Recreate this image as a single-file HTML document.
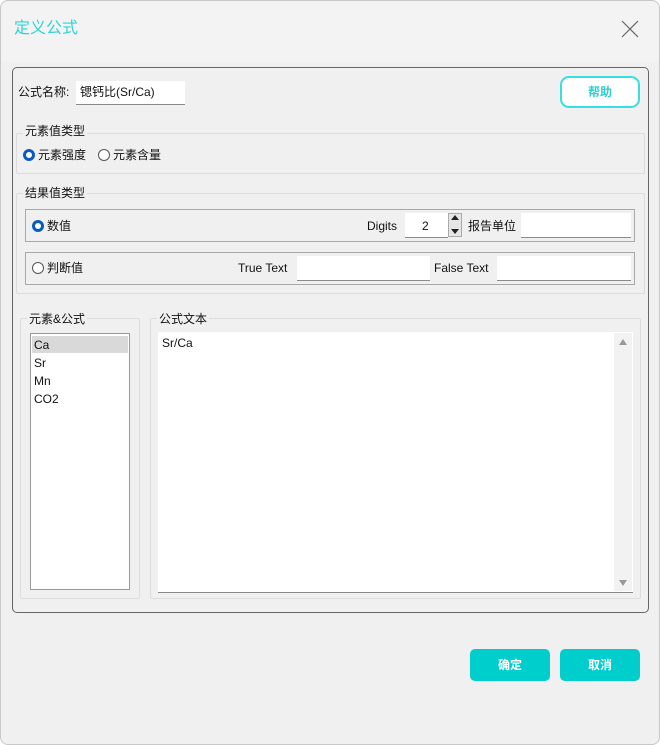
<!DOCTYPE html>
<html><head><meta charset="utf-8"><style>
*{box-sizing:border-box;margin:0;padding:0}
body{width:660px;height:745px;background:#fff;font-family:"Liberation Sans","Noto Sans CJK SC",sans-serif;font-size:12px;color:#111;position:relative;overflow:hidden}
.win{position:absolute;left:0;top:0;width:660px;height:745px;border-radius:8px;background:#f0f0f0;overflow:hidden}
.frame{position:absolute;left:0;top:0;width:660px;height:745px;border:1px solid #c8c8c8;border-radius:8px;pointer-events:none}
.hdr{position:absolute;left:0;top:0;width:660px;height:62px;background:#f3f3f3}
.a{position:absolute}
.t{position:absolute;white-space:nowrap;line-height:14px}
.inp{position:absolute;background:#fff;border-bottom:1px solid #8a8a8a}
.grp{position:absolute;border:1px solid #dcdcdc;border-radius:2px}
.box{position:absolute;border:1px solid #a8a8a8;background:#f0f0f0}
.rad{position:absolute;width:12px;height:12px;border-radius:50%;border:1px solid #555;background:#fff}
.rad.on{border:3.5px solid #0a5bbf}
.btn{position:absolute;width:80px;height:32px;border-radius:5px;background:#00cecd;color:#fff;font-weight:bold;text-align:center;line-height:32px;font-size:12px}
</style></head><body>
<div class="win">
<div class="hdr"></div>
<div class="t" style="left:14px;top:19px;font-size:16px;line-height:20px;color:#2fd4d4">定义公式</div>
<svg class="a" style="left:620px;top:19px" width="20" height="20"><path d="M2 2L18 18M18 2L2 18" stroke="#666" stroke-width="1.2"/></svg>

<div class="a" style="left:12px;top:67px;width:637px;height:546px;border:1px solid #666;border-radius:5px;background:#f0f0f0"></div>
<div class="t" style="left:18px;top:85px">公式名称:</div>
<div class="inp" style="left:76px;top:81px;width:109px;height:24px"></div>
<div class="t" style="left:80px;top:85px">锶钙比(Sr/Ca)</div>
<div class="a" style="left:560px;top:76px;width:80px;height:32px;border:2px solid #35e0e0;border-radius:9px;background:#fff;color:#2fcfcf;text-align:center;line-height:28px;font-weight:bold">帮助</div>

<div class="grp" style="left:16px;top:133px;width:629px;height:41px"></div>
<div class="t" style="left:23px;top:124px;background:#f0f0f0;padding:0 2px">元素值类型</div>
<div class="rad on" style="left:23px;top:149px"></div>
<div class="t" style="left:38px;top:148px">元素强度</div>
<div class="rad" style="left:98px;top:149px"></div>
<div class="t" style="left:113px;top:148px">元素含量</div>

<div class="grp" style="left:16px;top:193px;width:629px;height:101px"></div>
<div class="t" style="left:23px;top:186px;background:#f0f0f0;padding:0 2px">结果值类型</div>
<div class="box" style="left:25px;top:209px;width:610px;height:33px"></div>
<div class="rad on" style="left:32px;top:220px"></div>
<div class="t" style="left:47px;top:219px">数值</div>
<div class="t" style="left:367px;top:219px">Digits</div>
<div class="inp" style="left:405px;top:213px;width:43px;height:25px"></div>
<div class="t" style="left:422px;top:219px">2</div>
<div class="a" style="left:448px;top:213px;width:14px;height:24px;border:1px solid #aaa;background:#e6e6e6"></div>
<div class="a" style="left:451px;top:215px;width:0;height:0;border-left:4px solid transparent;border-right:4px solid transparent;border-bottom:5px solid #222"></div>
<div class="a" style="left:451px;top:229px;width:0;height:0;border-left:4px solid transparent;border-right:4px solid transparent;border-top:5px solid #222"></div>
<div class="t" style="left:468px;top:219px">报告单位</div>
<div class="inp" style="left:521px;top:213px;width:110px;height:25px"></div>

<div class="box" style="left:25px;top:252px;width:610px;height:33px"></div>
<div class="rad" style="left:32px;top:262px"></div>
<div class="t" style="left:47px;top:261px">判断值</div>
<div class="t" style="left:238px;top:261px">True Text</div>
<div class="inp" style="left:297px;top:256px;width:133px;height:25px"></div>
<div class="t" style="left:434px;top:261px">False Text</div>
<div class="inp" style="left:497px;top:256px;width:134px;height:25px"></div>

<div class="grp" style="left:20px;top:318px;width:120px;height:281px"></div>
<div class="t" style="left:27px;top:312px;background:#f0f0f0;padding:0 2px">元素&amp;公式</div>
<div class="a" style="left:30px;top:333px;width:100px;height:257px;background:#fff;border:1px solid #999"></div>
<div class="a" style="left:32px;top:336px;width:96px;height:17px;background:#d9d9d9"></div>
<div class="t" style="left:34px;top:338px">Ca</div>
<div class="t" style="left:34px;top:356px">Sr</div>
<div class="t" style="left:34px;top:374px">Mn</div>
<div class="t" style="left:34px;top:392px">CO2</div>

<div class="grp" style="left:150px;top:318px;width:491px;height:281px"></div>
<div class="t" style="left:157px;top:312px;background:#f0f0f0;padding:0 2px">公式文本</div>
<div class="a" style="left:158px;top:332px;width:475px;height:261px;background:#fff;border-bottom:1px solid #888"></div>
<div class="t" style="left:162px;top:336px">Sr/Ca</div>
<div class="a" style="left:614px;top:333px;width:18px;height:258px;background:#f2f2f2"></div>
<div class="a" style="left:619px;top:339px;width:0;height:0;border-left:4px solid transparent;border-right:4px solid transparent;border-bottom:6px solid #999"></div>
<div class="a" style="left:619px;top:580px;width:0;height:0;border-left:4px solid transparent;border-right:4px solid transparent;border-top:6px solid #999"></div>

<div class="btn" style="left:470px;top:649px">确定</div>
<div class="btn" style="left:560px;top:649px">取消</div>
</div>
<div class="frame"></div>
</body></html>
